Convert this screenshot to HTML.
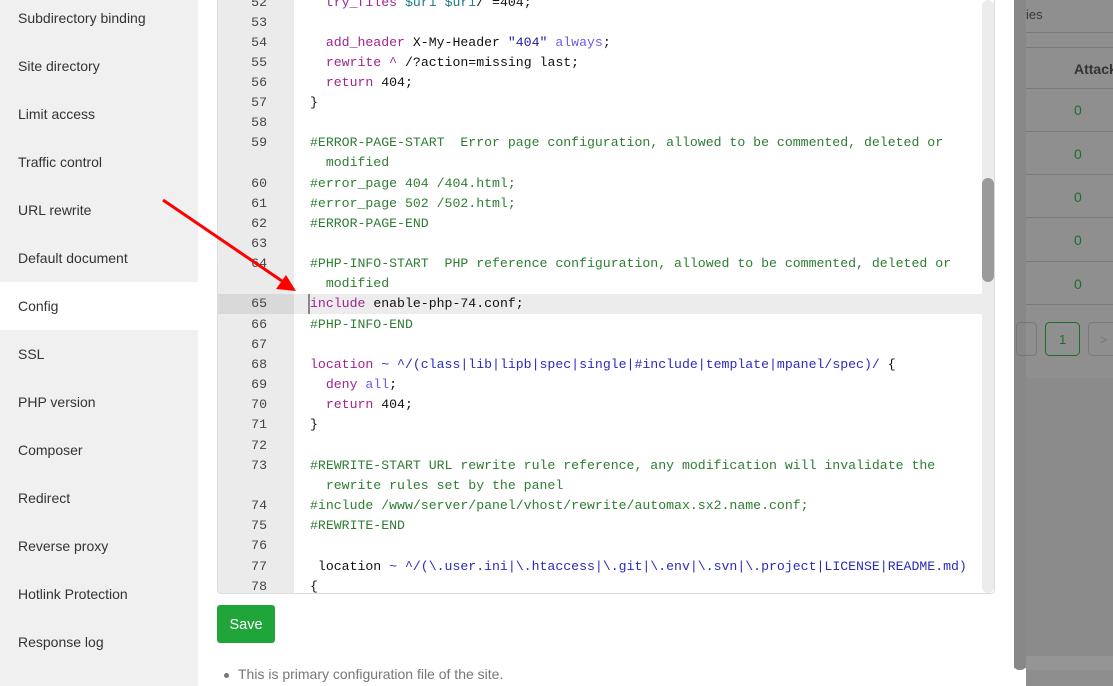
<!DOCTYPE html>
<html><head><meta charset="utf-8"><style>
*{margin:0;padding:0;box-sizing:border-box}
body{width:1113px;height:686px;overflow:hidden;position:relative;background:#fff;font-family:"Liberation Sans",sans-serif}
.side{position:absolute;left:0;top:0;width:198px;height:686px;background:#f0f0f0}
.side div{position:absolute;left:0;width:198px;height:48px;line-height:48px;padding-left:18px;font-size:14px;color:#333}
.side .act{background:#fff}
.ed{position:absolute;left:217px;top:-2px;width:778px;height:596px;border:1px solid #ddd;border-radius:0 0 4px 4px;overflow:hidden;background:#fff}
.gut{position:absolute;left:0;top:0;width:76px;height:100%;background:#ebebeb}
.row{position:absolute;left:0;width:765px;height:20.15px;font-family:"Liberation Mono",monospace;font-size:13.2px;line-height:20.15px;color:#111;white-space:pre}
.row .n{position:absolute;left:0;width:49px;text-align:right;color:#444}
.row .t{position:absolute;left:92px}
.hl{background:#ececec}
.hl .n{background:#d9d9d9;width:76px;padding-right:27px}
.k{color:#a0258f}.c{color:#2e7d32}.s{color:#1a1aa6}.a{color:#6c5cf0}.r{color:#2b2bbd}.v{color:#1b7a8a}
.sb{position:absolute;left:982px;top:0;width:12px;height:593px;background:#ececec;border-radius:6px}
.th{position:absolute;left:982px;top:178px;width:12px;height:104px;background:#9a9a9a;border-radius:6px}
.btn{position:absolute;left:217px;top:605px;width:58px;height:38px;background:#20a53a;border-radius:3px;color:#fff;font-size:14.5px;text-align:center;line-height:40px}
.note{position:absolute;left:238px;top:666px;font-size:14px;color:#777}
.dot{position:absolute;left:224px;top:673px;width:5px;height:5px;border-radius:50%;background:#777}
</style></head><body>
<div class="side">
<div style="top:-6px">Subdirectory binding</div>
<div style="top:42px">Site directory</div>
<div style="top:90px">Limit access</div>
<div style="top:138px">Traffic control</div>
<div style="top:186px">URL rewrite</div>
<div style="top:234px">Default document</div>
<div class="act" style="top:282px">Config</div>
<div style="top:330px">SSL</div>
<div style="top:378px">PHP version</div>
<div style="top:426px">Composer</div>
<div style="top:474px">Redirect</div>
<div style="top:522px">Reverse proxy</div>
<div style="top:570px">Hotlink Protection</div>
<div style="top:618px">Response log</div>
</div>

<div class="ed">
<div class="gut"></div>
<div class="row" style="top:-6px"><span class="n">52</span><span class="t">  <span class="k">try_files</span> <span class="v">$uri</span> <span class="v">$uri</span>/ =404;</span></div>
<div class="row" style="top:14px"><span class="n">53</span></div>
<div class="row" style="top:34px"><span class="n">54</span><span class="t">  <span class="k">add_header</span> X-My-Header <span class="s">"404"</span> <span class="a">always</span>;</span></div>
<div class="row" style="top:54px"><span class="n">55</span><span class="t">  <span class="k">rewrite</span> <span class="k">^</span> /?action=missing last;</span></div>
<div class="row" style="top:74px"><span class="n">56</span><span class="t">  <span class="k">return</span> 404;</span></div>
<div class="row" style="top:94px"><span class="n">57</span><span class="t">}</span></div>
<div class="row" style="top:114px"><span class="n">58</span></div>
<div class="row" style="top:134px"><span class="n">59</span><span class="t c">#ERROR-PAGE-START  Error page configuration, allowed to be commented, deleted or</span></div>
<div class="row" style="top:154px"><span class="t c">  modified</span></div>
<div class="row" style="top:175px"><span class="n">60</span><span class="t c">#error_page 404 /404.html;</span></div>
<div class="row" style="top:195px"><span class="n">61</span><span class="t c">#error_page 502 /502.html;</span></div>
<div class="row" style="top:215px"><span class="n">62</span><span class="t c">#ERROR-PAGE-END</span></div>
<div class="row" style="top:235px"><span class="n">63</span></div>
<div class="row" style="top:255px"><span class="n">64</span><span class="t c">#PHP-INFO-START  PHP reference configuration, allowed to be commented, deleted or</span></div>
<div class="row" style="top:275px"><span class="t c">  modified</span></div>
<div class="row hl" style="top:295px"><span class="n">65</span><span class="t" style="border-left:2px solid #888;margin-left:-2px"><span class="k">include</span> enable-php-74.conf;</span></div>
<div class="row" style="top:316px"><span class="n">66</span><span class="t c">#PHP-INFO-END</span></div>
<div class="row" style="top:336px"><span class="n">67</span></div>
<div class="row" style="top:356px"><span class="n">68</span><span class="t"><span class="k">location</span> <span class="r">~ ^/(class|lib|lipb|spec|single|#include|template|mpanel/spec)/</span> {</span></div>
<div class="row" style="top:376px"><span class="n">69</span><span class="t">  <span class="k">deny</span> <span class="a">all</span>;</span></div>
<div class="row" style="top:396px"><span class="n">70</span><span class="t">  <span class="k">return</span> 404;</span></div>
<div class="row" style="top:416px"><span class="n">71</span><span class="t">}</span></div>
<div class="row" style="top:437px"><span class="n">72</span></div>
<div class="row" style="top:457px"><span class="n">73</span><span class="t c">#REWRITE-START URL rewrite rule reference, any modification will invalidate the</span></div>
<div class="row" style="top:477px"><span class="t c">  rewrite rules set by the panel</span></div>
<div class="row" style="top:497px"><span class="n">74</span><span class="t c">#include /www/server/panel/vhost/rewrite/automax.sx2.name.conf;</span></div>
<div class="row" style="top:517px"><span class="n">75</span><span class="t c">#REWRITE-END</span></div>
<div class="row" style="top:537px"><span class="n">76</span></div>
<div class="row" style="top:558px"><span class="n">77</span><span class="t"> location <span class="r">~ ^/(\.user.ini|\.htaccess|\.git|\.env|\.svn|\.project|LICENSE|README.md)</span></span></div>
<div class="row" style="top:578px"><span class="n">78</span><span class="t">{</span></div>
</div>
<div class="sb"></div><div class="th"></div>

<svg style="position:absolute;left:0;top:0" width="400" height="320"><line x1="163" y1="200" x2="282" y2="281" stroke="#f00" stroke-width="3"/><polygon points="296,291 276,289 286,275" fill="#f00"/></svg>

<div class="btn">Save</div>
<div class="dot"></div><div class="note">This is primary configuration file of the site.</div>

<svg style="position:absolute;left:1014px;top:0" width="99" height="686">
<rect x="0" y="0" width="99" height="686" fill="#8b8b8b"/>
<rect x="12" y="0" width="87" height="378" fill="#8f8f8f"/>
<rect x="12" y="656" width="87" height="14" fill="#959595"/>
<rect x="12" y="670" width="87" height="16" fill="#8d8d8d"/>
<rect x="0" y="668" width="12" height="18" fill="#ffffff"/>
<rect x="0" y="660" width="12" height="10" rx="5" fill="#888"/>
<rect x="0" y="0" width="12" height="664" fill="#888"/>
<g fill="#7a7a7a"><rect x="12" y="32" width="87" height="1"/><rect x="12" y="47" width="87" height="1"/><rect x="12" y="88" width="87" height="1"/><rect x="12" y="131" width="87" height="1"/><rect x="12" y="174" width="87" height="1"/><rect x="12" y="217" width="87" height="1"/><rect x="12" y="261" width="87" height="1"/><rect x="12" y="304" width="87" height="1"/></g>
<text x="12" y="19" font-family="Liberation Sans" font-size="13" fill="#3a3a3a">ies</text>
<text x="60" y="74" font-family="Liberation Sans" font-size="14" font-weight="bold" fill="#333">Attack</text>
<g font-family="Liberation Sans" font-size="14" fill="#1f6d2a"><text x="60" y="115">0</text><text x="60" y="159">0</text><text x="60" y="202">0</text><text x="60" y="245">0</text><text x="60" y="289">0</text></g>
<rect x="2.5" y="322.5" width="20" height="33" rx="4" fill="none" stroke="#777"/>
<rect x="31.5" y="322.5" width="34" height="33" rx="4" fill="none" stroke="#1f6d2a"/>
<text x="45" y="344" font-family="Liberation Sans" font-size="13" fill="#1f6d2a">1</text>
<rect x="74.5" y="322.5" width="34" height="33" rx="4" fill="none" stroke="#7a7a7a"/>
<text x="86" y="344" font-family="Liberation Sans" font-size="13" fill="#777">&gt;</text>
</svg>
</body></html>
